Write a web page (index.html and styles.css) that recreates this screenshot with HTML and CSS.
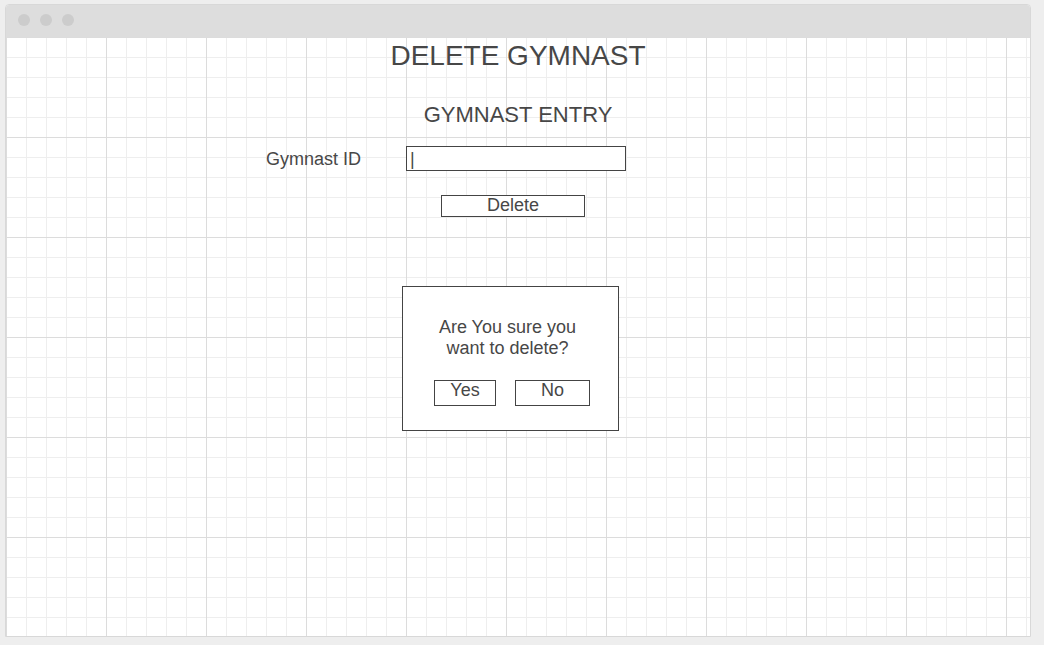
FILE: index.html
```html
<!DOCTYPE html>
<html>
<head>
<meta charset="utf-8">
<title>Delete Gymnast</title>
<link rel="stylesheet" href="styles.css">
</head>
<body>
<div class="window">
  <div class="titlebar">
    <span class="dot"></span><span class="dot"></span><span class="dot"></span>
  </div>
  <div class="canvas">
    <h1 class="title">DELETE GYMNAST</h1>
    <h2 class="subtitle">GYMNAST ENTRY</h2>
    <div class="field-row">
      <label class="field-label">Gymnast ID</label>
      <div class="field-input">|</div>
    </div>
    <div class="btn btn-delete">Delete</div>
    <div class="dialog">
      <p class="dialog-text">Are You sure you<br>want to delete?</p>
      <div class="dialog-actions">
        <div class="btn btn-yes">Yes</div>
        <div class="btn btn-no">No</div>
      </div>
    </div>
  </div>
</div>
</body>
</html>
```
FILE: styles.css
```css
html, body {
  margin: 0;
  padding: 0;
}
body {
  background: #eeeeee;
  padding: 4px 0 0 5px;
  height: 645px;
  box-sizing: border-box;
  overflow: hidden;
  font-family: "Liberation Sans", Arial, sans-serif;
  color: #474747;
}
.window {
  width: 1026px;
  height: 633px;
  box-sizing: border-box;
  border: 1px solid #d8d8d8;
  border-radius: 4px 4px 0 0;
  background: #ffffff;
  overflow: hidden;
}
.titlebar {
  height: 32px;
  background: #dddddd;
  display: flex;
  gap: 10px;
  padding: 9px 0 0 12px;
  box-sizing: border-box;
}
.dot {
  width: 12px;
  height: 12px;
  border-radius: 50%;
  background: #cccccc;
}
.canvas {
  height: 600px;
  box-sizing: border-box;
  padding-top: 3px;
  background-color: #ffffff;
  background-image:
    linear-gradient(to right, #dcdcdc 1px, transparent 1px),
    linear-gradient(to bottom, #dcdcdc 1px, transparent 1px),
    linear-gradient(to right, #eeeeee 1px, transparent 1px),
    linear-gradient(to bottom, #eeeeee 1px, transparent 1px);
  background-size: 100px 100px, 100px 100px, 20px 20px, 20px 20px;
}
.title {
  margin: 0;
  font-size: 28px;
  line-height: 32px;
  height: 32px;
  font-weight: normal;
  text-align: center;
}
.subtitle {
  margin: 30px 0 0;
  font-size: 22px;
  line-height: 26px;
  height: 26px;
  font-weight: normal;
  text-align: center;
}
.field-row {
  margin: 18px 0 0 260px;
  display: flex;
  align-items: center;
  height: 25px;
}
.field-label {
  width: 140px;
  font-size: 18px;
  line-height: 21px;
  padding-top: 2px;
}
.field-input {
  width: 220px;
  height: 25px;
  box-sizing: border-box;
  border: 1px solid #444444;
  font-size: 18px;
  line-height: 24px;
  padding-left: 3px;
  background: #ffffff;
}
.btn {
  box-sizing: border-box;
  border: 1px solid #444444;
  background: #ffffff;
  font-size: 18px;
  text-align: center;
}
.btn-delete {
  margin: 24px 0 0 435px;
  width: 144px;
  height: 22px;
  line-height: 18px;
}
.dialog {
  margin: 69px 0 0 396px;
  width: 217px;
  height: 145px;
  box-sizing: border-box;
  border: 1px solid #444444;
  background: #ffffff;
  padding-top: 30px;
}
.dialog-text {
  margin: 0;
  font-size: 18px;
  line-height: 21px;
  text-align: center;
  padding-right: 6px;
}
.dialog-actions {
  display: flex;
  gap: 19px;
  margin: 21px 0 0 31px;
}
.btn-yes, .btn-no {
  height: 26px;
  line-height: 19px;
}
.btn-yes {
  width: 62px;
}
.btn-no {
  width: 75px;
}
```
